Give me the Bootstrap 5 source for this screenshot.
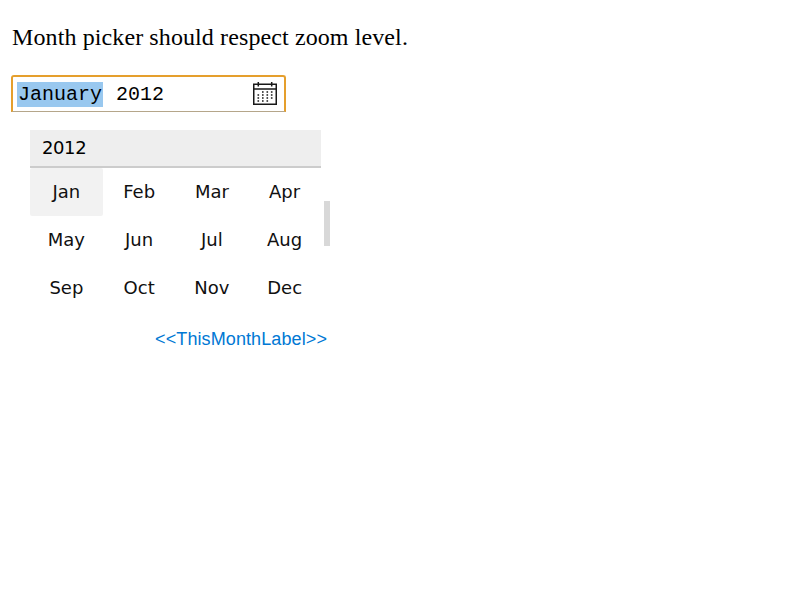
<!DOCTYPE html>
<html lang="en">
<head>
<meta charset="utf-8">
<title>Month picker</title>
<link href="https://cdn.jsdelivr.net/npm/bootstrap@5.3.0/dist/css/bootstrap.min.css" rel="stylesheet">
<style>
body { background: #fff; color: #000; }
.page { padding: 19px 0 0 12px; }
.intro { font: 24px/36px "Liberation Serif", serif; letter-spacing: .105px; margin-bottom: 20px; }
.month-field { width: 275px; height: 37px; margin-left: -1px; border: 2px solid #e59f2d; border-bottom: 1px solid #b5a68a; border-radius: 3px 3px 0 0; padding: 0 7px 0 4px; font: 20px/25px "Liberation Mono", monospace; }
.month-part { background: #99c8ef; padding: 0 1px; }
.year-part { margin-left: 13px; }
.popup { width: 300px; margin: 18px 0 0 18px; font-family: "DejaVu Sans", sans-serif; font-size: 18px; }
.months { width: 291px; }
.year-head { height: 38px; background: #eee; border-bottom: 2px solid #ccc; padding-left: 12px; line-height: 36px; letter-spacing: -.4px; }
.month-cell { height: 48px; line-height: 48px; color: #101010; }
.chosen { background: #f2f2f2; border-radius: 2px; }
.thumb { width: 6px; height: 45px; margin: 71px 0 0 3px; background: #d8d8d8; }
.this-month { font: 18px/24px "Liberation Sans", sans-serif; letter-spacing: .1px; color: #0078d4; margin-top: 15px; padding-right: 3px; }
</style>
<script src="https://cdn.jsdelivr.net/npm/bootstrap@5.3.0/dist/js/bootstrap.bundle.min.js"></script>
</head>
<body>
<main class="page">
<p class="intro">Month picker should respect zoom level.</p>
<div class="month-field d-flex align-items-center">
<span class="month-part">January</span><span class="year-part">2012</span>
<svg class="ms-auto" width="24" height="24" viewBox="0 0 24 24" fill="none" stroke="#181818" aria-hidden="true">
<path stroke-width="1.5" d="M.75 2.25h22.5v19.9H.75zM1 7.1h22M5.3 0v4.5M18.7 0v4.5"/>
<path stroke-width="1.6" d="M9 10h1.6m2.9 0h1.6m2.8 0h1.6M4.5 13h1.6M9 13h1.6m2.9 0h1.6m2.8 0h1.6M4.5 16h1.6M9 16h1.6m2.9 0h1.6m2.8 0h1.6M4.5 19h1.6M9 19h1.6m2.9 0h1.6"/>
</svg>
</div>
<section class="popup">
<div class="d-flex">
<div class="months">
<div class="year-head">2012</div>
<div class="row row-cols-4 g-0 text-center">
<div class="col month-cell chosen">Jan</div><div class="col month-cell">Feb</div><div class="col month-cell">Mar</div><div class="col month-cell">Apr</div>
<div class="col month-cell">May</div><div class="col month-cell">Jun</div><div class="col month-cell">Jul</div><div class="col month-cell">Aug</div>
<div class="col month-cell">Sep</div><div class="col month-cell">Oct</div><div class="col month-cell">Nov</div><div class="col month-cell">Dec</div>
</div>
</div>
<div class="thumb"></div>
</div>
<div class="this-month text-end">&lt;&lt;ThisMonthLabel&gt;&gt;</div>
</section>
</main>
</body>
</html>
